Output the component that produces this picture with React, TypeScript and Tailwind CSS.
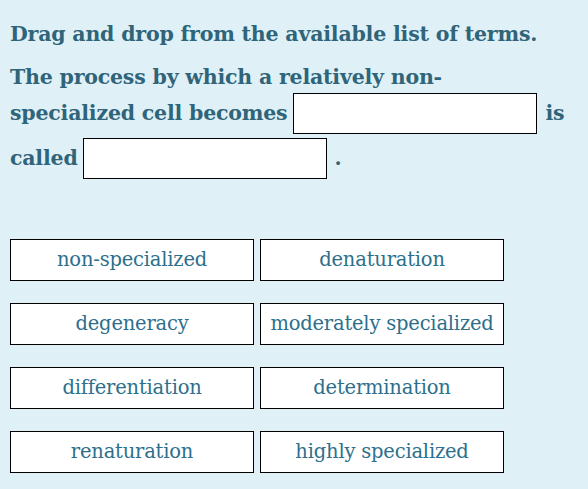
const terms = [
  'non-specialized',
  'denaturation',
  'degeneracy',
  'moderately specialized',
  'differentiation',
  'determination',
  'renaturation',
  'highly specialized',
]

const serif = { fontFamily: '"DejaVu Serif", "Liberation Serif", serif' }

function DropSlot({ className }: { className: string }) {
  return <span className={`inline-block h-[41px] w-[244px] shrink-0 border-[1.5px] border-black bg-white ${className}`} />
}

export default function App() {
  return (
    <div className="min-h-[489px] w-[588px] bg-[#dff0f7] pl-[10px] text-[#2f6479]" style={serif}>
      <div className="pt-[18px] text-[20.5px] font-bold tracking-[-0.2px]">
        <div className="flex h-[32px] items-center whitespace-nowrap">Drag and drop from the available list of terms.</div>
        <div className="mt-[12px] flex h-[31px] items-center whitespace-nowrap">The process by which a relatively non-</div>
        <div className="flex h-[41px] items-center whitespace-nowrap">
          <span>specialized cell becomes</span>
          <DropSlot className="ml-[6px]" />
          <span className="ml-[8px]">is</span>
        </div>
        <div className="mt-[4px] flex h-[41px] items-center whitespace-nowrap">
          <span>called</span>
          <DropSlot className="ml-[5px]" />
          <span className="ml-[8px]">.</span>
        </div>
      </div>

      <div className="mt-[60px] grid w-[494px] grid-cols-2 gap-x-[6px] gap-y-[22px]">
        {terms.map((t) => (
          <div
            key={t}
            className="flex h-[42px] items-center justify-center whitespace-nowrap border-[1.5px] border-black bg-white text-[19.5px] tracking-[-0.2px] text-[#2d6f8c]"
          >
            {t}
          </div>
        ))}
      </div>
    </div>
  )
}
